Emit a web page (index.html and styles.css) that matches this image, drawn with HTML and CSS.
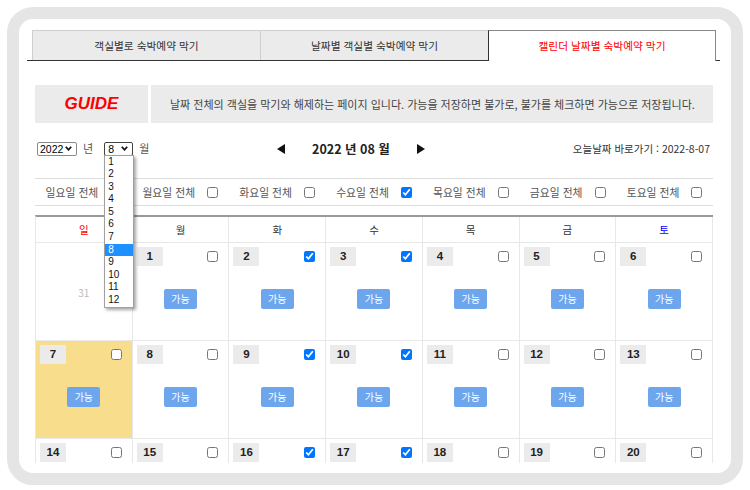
FILE: index.html
```html
<!DOCTYPE html>
<html lang="ko">
<head>
<meta charset="utf-8">
<title>캘린더 날짜별 숙박예약 막기</title>
<link rel="stylesheet" href="styles.css">
</head>
<body>
<div class="frame">
  <div class="viewport">
    <div class="tabs">
      <div class="tab">객실별로 숙박예약 막기</div>
      <div class="tab">날짜별 객실별 숙박예약 막기</div>
      <div class="tab active">캘린더 날짜별 숙박예약 막기</div>
    </div>
    <div class="content">
      <div class="guide">
        <div class="guide-title">GUIDE</div>
        <div class="guide-text">날짜 전체의 객실을 막기와 해제하는 페이지 입니다. 가능을 저장하면 불가로, 불가를 체크하면 가능으로 저장됩니다.</div>
      </div>

      <div class="toolbar">
        <div class="pickers">
          <span class="sel sel-year">2022<svg class="chev" width="7" height="5" viewBox="0 0 7 5"><polyline points="0.8,0.8 3.5,3.8 6.2,0.8" fill="none" stroke="#111" stroke-width="1.7"/></svg></span>
          <span class="unit unit-year">년</span>
          <span class="month-wrap">
            <span class="sel sel-month">8<svg class="chev" width="7" height="5" viewBox="0 0 7 5"><polyline points="0.8,0.8 3.5,3.8 6.2,0.8" fill="none" stroke="#111" stroke-width="1.7"/></svg></span>
            <ul class="popup">
              <li>1</li><li>2</li><li>3</li><li>4</li><li>5</li><li>6</li>
              <li>7</li><li class="on">8</li><li>9</li><li>10</li><li>11</li><li>12</li>
            </ul>
          </span>
          <span class="unit">월</span>
        </div>
        <div class="nav">
          <svg class="arrow" width="8" height="10" viewBox="0 0 8 10"><polygon points="8,0 8,10 0,5" fill="#111"/></svg>
          <span class="nav-title">2022 년 08 월</span>
          <svg class="arrow" width="8" height="10" viewBox="0 0 8 10"><polygon points="0,0 8,5 0,10" fill="#111"/></svg>
        </div>
        <div class="today">오늘날짜 바로가기 : 2022-8-07</div>
      </div>

      <div class="week-checks">
        <label class="wk">일요일 전체 <input type="checkbox"></label>
        <label class="wk">월요일 전체 <input type="checkbox"></label>
        <label class="wk">화요일 전체 <input type="checkbox"></label>
        <label class="wk">수요일 전체 <input type="checkbox" checked></label>
        <label class="wk">목요일 전체 <input type="checkbox"></label>
        <label class="wk">금요일 전체 <input type="checkbox"></label>
        <label class="wk">토요일 전체 <input type="checkbox"></label>
      </div>

      <div class="cal">
        <div class="dow sun">일</div>
        <div class="dow">월</div>
        <div class="dow">화</div>
        <div class="dow">수</div>
        <div class="dow">목</div>
        <div class="dow">금</div>
        <div class="dow sat">토</div>

        <div class="day prev"><span class="prev-num">31</span></div>
        <div class="day"><div class="day-top"><span class="num">1</span><input type="checkbox"></div><span class="btn">가능</span></div>
        <div class="day"><div class="day-top"><span class="num">2</span><input type="checkbox" checked></div><span class="btn">가능</span></div>
        <div class="day"><div class="day-top"><span class="num">3</span><input type="checkbox" checked></div><span class="btn">가능</span></div>
        <div class="day"><div class="day-top"><span class="num">4</span><input type="checkbox"></div><span class="btn">가능</span></div>
        <div class="day"><div class="day-top"><span class="num">5</span><input type="checkbox"></div><span class="btn">가능</span></div>
        <div class="day"><div class="day-top"><span class="num">6</span><input type="checkbox"></div><span class="btn">가능</span></div>

        <div class="day today-cell"><div class="day-top"><span class="num">7</span><input type="checkbox"></div><span class="btn">가능</span></div>
        <div class="day"><div class="day-top"><span class="num">8</span><input type="checkbox"></div><span class="btn">가능</span></div>
        <div class="day"><div class="day-top"><span class="num">9</span><input type="checkbox" checked></div><span class="btn">가능</span></div>
        <div class="day"><div class="day-top"><span class="num">10</span><input type="checkbox" checked></div><span class="btn">가능</span></div>
        <div class="day"><div class="day-top"><span class="num">11</span><input type="checkbox"></div><span class="btn">가능</span></div>
        <div class="day"><div class="day-top"><span class="num">12</span><input type="checkbox"></div><span class="btn">가능</span></div>
        <div class="day"><div class="day-top"><span class="num">13</span><input type="checkbox"></div><span class="btn">가능</span></div>

        <div class="day"><div class="day-top"><span class="num">14</span><input type="checkbox"></div></div>
        <div class="day"><div class="day-top"><span class="num">15</span><input type="checkbox"></div></div>
        <div class="day"><div class="day-top"><span class="num">16</span><input type="checkbox" checked></div></div>
        <div class="day"><div class="day-top"><span class="num">17</span><input type="checkbox" checked></div></div>
        <div class="day"><div class="day-top"><span class="num">18</span><input type="checkbox"></div></div>
        <div class="day"><div class="day-top"><span class="num">19</span><input type="checkbox"></div></div>
        <div class="day"><div class="day-top"><span class="num">20</span><input type="checkbox"></div></div>
      </div>
    </div>
  </div>
</div>
</body>
</html>
```

FILE: styles.css
```css
html, body {
  margin: 0;
  padding: 0;
  background: #fff;
}

body {
  font-family: "Noto Sans CJK KR", "Noto Sans", sans-serif;
  color: #333;
}

.frame {
  box-sizing: border-box;
  margin: 7px;
  width: 736px;
  height: 478px;
  border: 12px solid #e5e5e5;
  border-radius: 26px;
  padding-bottom: 10px;
  background: #fff;
}

.viewport {
  height: 444px;
  overflow: hidden;
}

/* ---------- tabs ---------- */
.tabs {
  display: flex;
  margin: 11px 11px 0 8px;
  padding-left: 5px;
  height: 30px;
  border-bottom: 1px solid #333;
}

.tab {
  box-sizing: border-box;
  width: 229px;
  height: 30px;
  margin-right: -1px;
  background: #ebebeb;
  border: 1px solid #cfcfcf;
  border-bottom: none;
  text-align: center;
  font-size: 10.7px;
  line-height: 30px;
  color: #333;
}

.tab.active {
  width: 228px;
  height: 31px;
  background: #fff;
  border-color: #888;
  border-left-color: #333;
  color: #f00;
  position: relative;
  z-index: 1;
}

/* ---------- content ---------- */
.content {
  margin: 0 18px 0 16px;
}

.guide {
  display: flex;
  gap: 3px;
  height: 38px;
  margin-top: 24px;
}

.guide-title {
  width: 113px;
  background: #ebebeb;
  text-align: center;
  line-height: 38px;
  font-family: "Liberation Sans", Arial, sans-serif;
  font-weight: bold;
  font-style: italic;
  font-size: 17px;
  color: #f00;
}

.guide-text {
  flex: 1;
  background: #ebebeb;
  padding-left: 19px;
  line-height: 38px;
  font-size: 11px;
  color: #444;
  white-space: nowrap;
}

/* ---------- toolbar ---------- */
.toolbar {
  display: flex;
  align-items: center;
  height: 17px;
  margin-top: 17px;
}

.pickers {
  flex: 0 0 240px;
  display: flex;
  align-items: center;
  padding-left: 2px;
}

.sel {
  box-sizing: border-box;
  display: inline-flex;
  align-items: center;
  justify-content: space-between;
  height: 14px;
  padding: 0 4px 0 2px;
  font-family: "Liberation Sans", Arial, sans-serif;
  font-size: 10.5px;
  line-height: 12px;
  color: #000;
  border: 1px solid #8a8a8a;
  border-radius: 2px;
  background: #fff;
}

.chev {
  display: block;
}

.sel-year {
  width: 40px;
}

.sel-month {
  width: 29px;
  border-color: #444;
  padding-left: 3px;
}

.unit {
  font-size: 11px;
  line-height: 15px;
  color: #555;
  margin-left: 6px;
}

.unit-year {
  margin-right: 11px;
}

.month-wrap {
  position: relative;
  display: inline-flex;
}

.popup {
  position: absolute;
  left: 0;
  top: 13px;
  z-index: 5;
  box-sizing: border-box;
  width: 30px;
  margin: 0;
  padding: 0;
  list-style: none;
  background: #fff;
  border: 1px solid #a0a0a0;
  box-shadow: 2px 2px 3px rgba(0, 0, 0, 0.35);
}

.popup li {
  height: 12.6px;
  line-height: 12.6px;
  padding-left: 3px;
  font-family: "Liberation Sans", Arial, sans-serif;
  font-size: 10px;
  color: #111;
}

.popup li.on {
  background: #1e90ff;
  color: #fff;
}

.nav {
  display: flex;
  align-items: center;
}

.arrow {
  display: block;
}

.nav-title {
  margin: 0 27px 0 27px;
  font-size: 12.5px;
  font-weight: bold;
  color: #222;
  line-height: 17px;
}

.today {
  margin-left: auto;
  padding-right: 3px;
  font-size: 10.5px;
  color: #333;
  line-height: 17px;
}

/* ---------- weekday checks ---------- */
.week-checks {
  display: grid;
  grid-template-columns: repeat(7, 1fr);
  margin-top: 21px;
  height: 26px;
  border-top: 1px solid #ddd;
  border-bottom: 1px solid #ddd;
}

.wk {
  display: flex;
  align-items: center;
  justify-content: center;
  font-size: 10.8px;
  color: #555;
  white-space: pre;
}

.wk input,
.day-top input {
  width: 11px;
  height: 11px;
  margin: 0;
}

.wk input {
  margin-left: 9px;
}

/* ---------- calendar ---------- */
.cal {
  display: grid;
  grid-template-columns: repeat(7, 1fr);
  margin-top: 9px;
  border-top: 2px solid #999;
  border-left: 1px solid #e8e8e8;
}

.dow {
  height: 25px;
  line-height: 25px;
  text-align: center;
  font-size: 10.5px;
  color: #333;
  border-right: 1px solid #e8e8e8;
  border-bottom: 1px solid #e8e8e8;
}

.dow.sun {
  color: #f00;
}

.dow.sat {
  color: #00f;
}

.day {
  box-sizing: border-box;
  height: 98px;
  padding: 4px 10px 0 4px;
  border-right: 1px solid #e8e8e8;
  border-bottom: 1px solid #e8e8e8;
  display: flex;
  flex-direction: column;
}

.day.prev {
  align-items: center;
  justify-content: center;
  padding: 0;
}

.prev-num {
  font-size: 10px;
  color: #bbb;
  margin-top: 2px;
}

.today-cell {
  background: #f8dd8d;
}

.day-top {
  display: flex;
  align-items: center;
  justify-content: space-between;
  height: 19px;
}

.num {
  width: 26px;
  height: 19px;
  background: #ebebeb;
  text-align: center;
  line-height: 19px;
  font-family: "Liberation Sans", Arial, sans-serif;
  font-weight: bold;
  font-size: 11.5px;
  color: #222;
}

.btn {
  align-self: center;
  margin: 23px 0 0 6px;
  width: 33px;
  height: 20px;
  line-height: 20px;
  text-align: center;
  background: #6ea6ee;
  color: #fff;
  font-size: 10px;
  border-radius: 2px;
}
```
